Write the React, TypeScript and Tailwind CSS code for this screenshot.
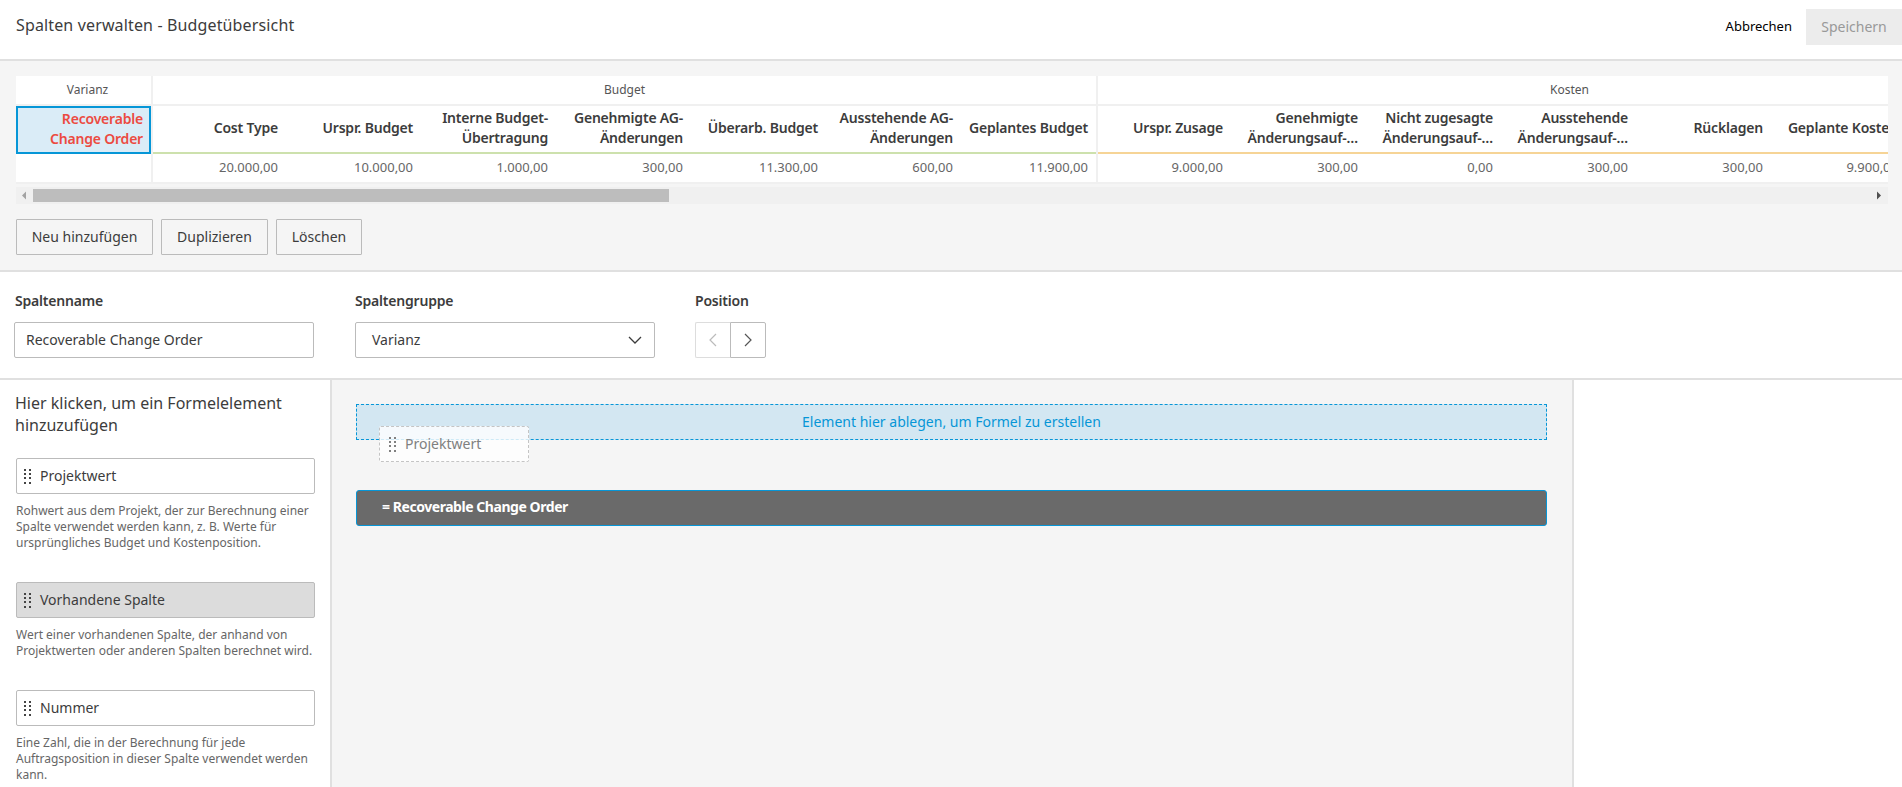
import React from "react";

function Grip({ color = "#555" }: { color?: string }) {
  return (
    <svg width="8" height="17" viewBox="0 0 8 17" className="shrink-0" fill={color}>
      {[1, 5, 9, 14].map((y) => (
        <g key={y}>
          <rect x="0" y={y} width="2" height="2" />
          <rect x="5" y={y} width="2" height="2" />
        </g>
      ))}
    </svg>
  );
}

type Col = { label: string[]; value: string };
const budget: Col[] = [
  { label: ["Cost Type"], value: "20.000,00" },
  { label: ["Urspr. Budget"], value: "10.000,00" },
  { label: ["Interne Budget-", "Übertragung"], value: "1.000,00" },
  { label: ["Genehmigte AG-", "Änderungen"], value: "300,00" },
  { label: ["Überarb. Budget"], value: "11.300,00" },
  { label: ["Ausstehende AG-", "Änderungen"], value: "600,00" },
  { label: ["Geplantes Budget"], value: "11.900,00" },
];
const kosten: Col[] = [
  { label: ["Urspr. Zusage"], value: "9.000,00" },
  { label: ["Genehmigte", "Änderungsauf-…"], value: "300,00" },
  { label: ["Nicht zugesagte", "Änderungsauf-…"], value: "0,00" },
  { label: ["Ausstehende", "Änderungsauf-…"], value: "300,00" },
  { label: ["Rücklagen"], value: "300,00" },
  { label: ["Geplante Kosten"], value: "9.900,00" },
  { label: [""], value: "" },
];

function Group({ title, cols, line }: { title: string; cols: Col[]; line: string }) {
  return (
    <div className="flex w-[945px] shrink-0 flex-col border-l-2 border-[#f0f0f0]">
      <div className="flex h-[30px] items-center justify-center border-b-2 border-[#f0f0f0] text-[12px] text-[#555]">
        {title}
      </div>
      <div className={`flex h-[48px] border-b-2 ${line}`}>
        {cols.map((c, i) => (
          <div
            key={i}
            className={`flex shrink-0 flex-col justify-center pb-[2px] pr-2 text-right text-[14px] font-semibold leading-[20px] tracking-[-0.2px] text-[#3c3c3c] whitespace-nowrap ${i === 0 ? "w-[133px]" : "w-[135px]"}`}
          >
            {c.label.map((l) => (
              <span key={l}>{l}</span>
            ))}
          </div>
        ))}
      </div>
      <div className="flex h-[30px] border-b-2 border-[#f0f0f0]">
        {cols.map((c, i) => (
          <div
            key={i}
            className={`flex shrink-0 items-center justify-end pr-2 text-[13px] text-[#666] ${i === 0 ? "w-[133px]" : "w-[135px]"}`}
          >
            {c.value}
          </div>
        ))}
      </div>
    </div>
  );
}

function Desc({ children }: { children: React.ReactNode }) {
  return <p className="mt-[9px] text-[12px] leading-[16px] text-[#666]">{children}</p>;
}

function Element({ label, active }: { label: string; active?: boolean }) {
  return (
    <div
      className={`flex h-9 items-center gap-[8px] rounded-[2px] border border-[#bbb] pl-[7px] text-[14px] text-[#3c3c3c] ${active ? "bg-[#dcdcdc]" : "bg-white"}`}
    >
      <Grip color="#444" />
      <span className="pb-[2px]">{label}</span>
    </div>
  );
}

const actionButton =
  "h-9 rounded-[1px] border border-[#bbb] bg-[#f5f5f5] pb-[2px] text-[14px] text-[#3c3c3c]";

export default function App() {
  return (
    <div className="flex h-[787px] w-[1902px] flex-col overflow-hidden bg-white text-[#3c3c3c] [font-family:'Noto_Sans',sans-serif]">
      {/* Header */}
      <header className="flex h-[61px] shrink-0 items-start justify-between border-b-2 border-[#e0e0e0] bg-white">
        <h1 className="mt-[13px] pl-4 text-[16px] leading-6 tracking-[0.14px] text-[#3c3c3c]">Spalten verwalten - Budgetübersicht</h1>
        <div className="flex items-center pt-[9px]">
          <span className="mr-[14px] text-[13px] text-black">Abbrechen</span>
          <button className="h-9 w-24 bg-[#ececec] pb-[2px] text-[14px] text-[#999]">Speichern</button>
        </div>
      </header>

      {/* Table + actions */}
      <section className="h-[211px] shrink-0 border-b-2 border-[#e0e0e0] bg-[#f5f5f5] pl-4 pr-[14px] pt-[15px]">
        <div className="flex overflow-hidden bg-white">
          <div className="flex w-[135px] shrink-0 flex-col">
            <div className="flex h-[30px] items-center justify-center border-b-2 border-[#f0f0f0] pl-2 text-[12px] text-[#555]">
              Varianz
            </div>
            <div className="flex h-[48px] flex-col justify-center border-2 border-[#0696d7] bg-[#daecf7] pb-[2px] pr-[6px] text-right text-[14px] font-semibold leading-[20px] tracking-[-0.2px] text-[#ec4a41]">
              <span>Recoverable</span>
              <span>Change Order</span>
            </div>
            <div className="h-[30px] border-b-2 border-[#f0f0f0]" />
          </div>
          <Group title="Budget" cols={budget} line="border-[#cde1ad]" />
          <Group title="Kosten" cols={kosten} line="border-[#f6d496]" />
        </div>

        {/* Scrollbar */}
        <div className="mt-[3px] flex h-[17px] items-center bg-[#f0f0f0]">
          <svg width="17" height="17" viewBox="0 0 17 17" className="shrink-0" fill="#a3a3a3">
            <path d="M6 8.5 10 4.5v8z" />
          </svg>
          <div className="h-[13px] w-[636px] bg-[#bdbdbd]" />
          <div className="flex-1" />
          <svg width="17" height="17" viewBox="0 0 17 17" className="shrink-0" fill="#505050">
            <path d="M10 8.5 6 4.5v8z" />
          </svg>
        </div>

        <div className="mt-[15px] flex gap-2">
          <button className={`w-[137px] ${actionButton}`}>Neu hinzufügen</button>
          <button className={`w-[107px] ${actionButton}`}>Duplizieren</button>
          <button className={`w-[86px] ${actionButton}`}>Löschen</button>
        </div>
      </section>

      {/* Form */}
      <section className="flex h-[108px] shrink-0 border-b-2 border-[#e0e0e0] pl-[14px] pt-[19px]">
        <div className="w-[300px]">
          <label className="block pl-px text-[14px] font-semibold leading-[20px] tracking-[-0.2px]">Spaltenname</label>
          <input
            readOnly
            value="Recoverable Change Order"
            className="mt-[11px] h-9 w-full rounded-[2px] border border-[#bbb] bg-white pb-[2px] pl-[11px] text-[14px] text-[#3c3c3c] outline-none"
          />
        </div>
        <div className="ml-[41px] w-[300px]">
          <label className="block text-[14px] font-semibold leading-[20px] tracking-[-0.2px]">Spaltengruppe</label>
          <div className="mt-[11px] flex h-9 items-center justify-between rounded-[2px] border border-[#bbb] bg-white pl-4 pr-[12px] text-[14px]">
            <span className="pb-[2px]">Varianz</span>
            <svg width="14" height="8" viewBox="0 0 14 8" fill="none" stroke="#3c3c3c" strokeWidth="1.3">
              <path d="M1 1l6 6 6-6" />
            </svg>
          </div>
        </div>
        <div className="ml-[40px]">
          <label className="block text-[14px] font-semibold leading-[20px] tracking-[-0.2px]">Position</label>
          <div className="mt-[11px] flex h-9 w-[71px]">
            <div className="flex w-[35px] items-center justify-center rounded-l-[2px] border border-r-0 border-[#ddd]">
              <svg width="8" height="14" viewBox="0 0 8 14" fill="none" stroke="#bbb" strokeWidth="1.2">
                <path d="M7 1 1 7l6 6" />
              </svg>
            </div>
            <div className="flex w-[36px] items-center justify-center rounded-r-[2px] border border-[#bbb]">
              <svg width="8" height="14" viewBox="0 0 8 14" fill="none" stroke="#555" strokeWidth="1.2">
                <path d="M1 1l6 6-6 6" />
              </svg>
            </div>
          </div>
        </div>
      </section>

      {/* Builder */}
      <section className="flex min-h-0 flex-1">
        <aside className="w-[332px] shrink-0 border-r-2 border-[#e0e0e0] pl-4 pr-[15px] pt-[12px]">
          <h2 className="-ml-px text-[16px] leading-[22px] text-[#3c3c3c]">Hier klicken, um ein Formelelement hinzuzufügen</h2>
          <div className="mt-[22px]">
            <Element label="Projektwert" />
            <Desc>
              Rohwert aus dem Projekt, der zur Berechnung einer Spalte verwendet werden kann, z. B. Werte für
              ursprüngliches Budget und Kostenposition.
            </Desc>
          </div>
          <div className="mt-[31px]">
            <Element label="Vorhandene Spalte" active />
            <Desc>Wert einer vorhandenen Spalte, der anhand von Projektwerten oder anderen Spalten berechnet wird.</Desc>
          </div>
          <div className="mt-[31px]">
            <Element label="Nummer" />
            <Desc>
              Eine Zahl, die in der Berechnung für jede Auftragsposition in dieser Spalte verwendet werden kann.
            </Desc>
          </div>
        </aside>

        <main className="relative w-[1242px] shrink-0 border-r-2 border-[#e0e0e0] bg-[#f5f5f5] pl-[24px] pr-[25px] pt-[24px]">
          <div className="flex h-9 items-center justify-center border border-dashed border-[#0696d7] bg-[#d3e7f2] pb-[2px] text-[14px] text-[#0696d7]">
            Element hier ablegen, um Formel zu erstellen
          </div>
          <div className="absolute left-[47px] top-[46px] flex h-9 w-[150px] items-center gap-[8px] rounded-[2px] border border-dashed border-[#c4c4c4] bg-white/80 pl-[9px] text-[14px] text-[#808080]">
            <Grip color="#808080" />
            <span className="pb-[2px]">Projektwert</span>
          </div>
          <div className="mt-[50px] flex h-9 items-center rounded-[3px] border border-[#0696d7] bg-[#6a6a6a] pb-[3px] pl-[25px] text-[14px] font-bold tracking-[-0.45px] text-white">
            = Recoverable Change Order
          </div>
        </main>
        <div className="flex-1 bg-white" />
      </section>
    </div>
  );
}
